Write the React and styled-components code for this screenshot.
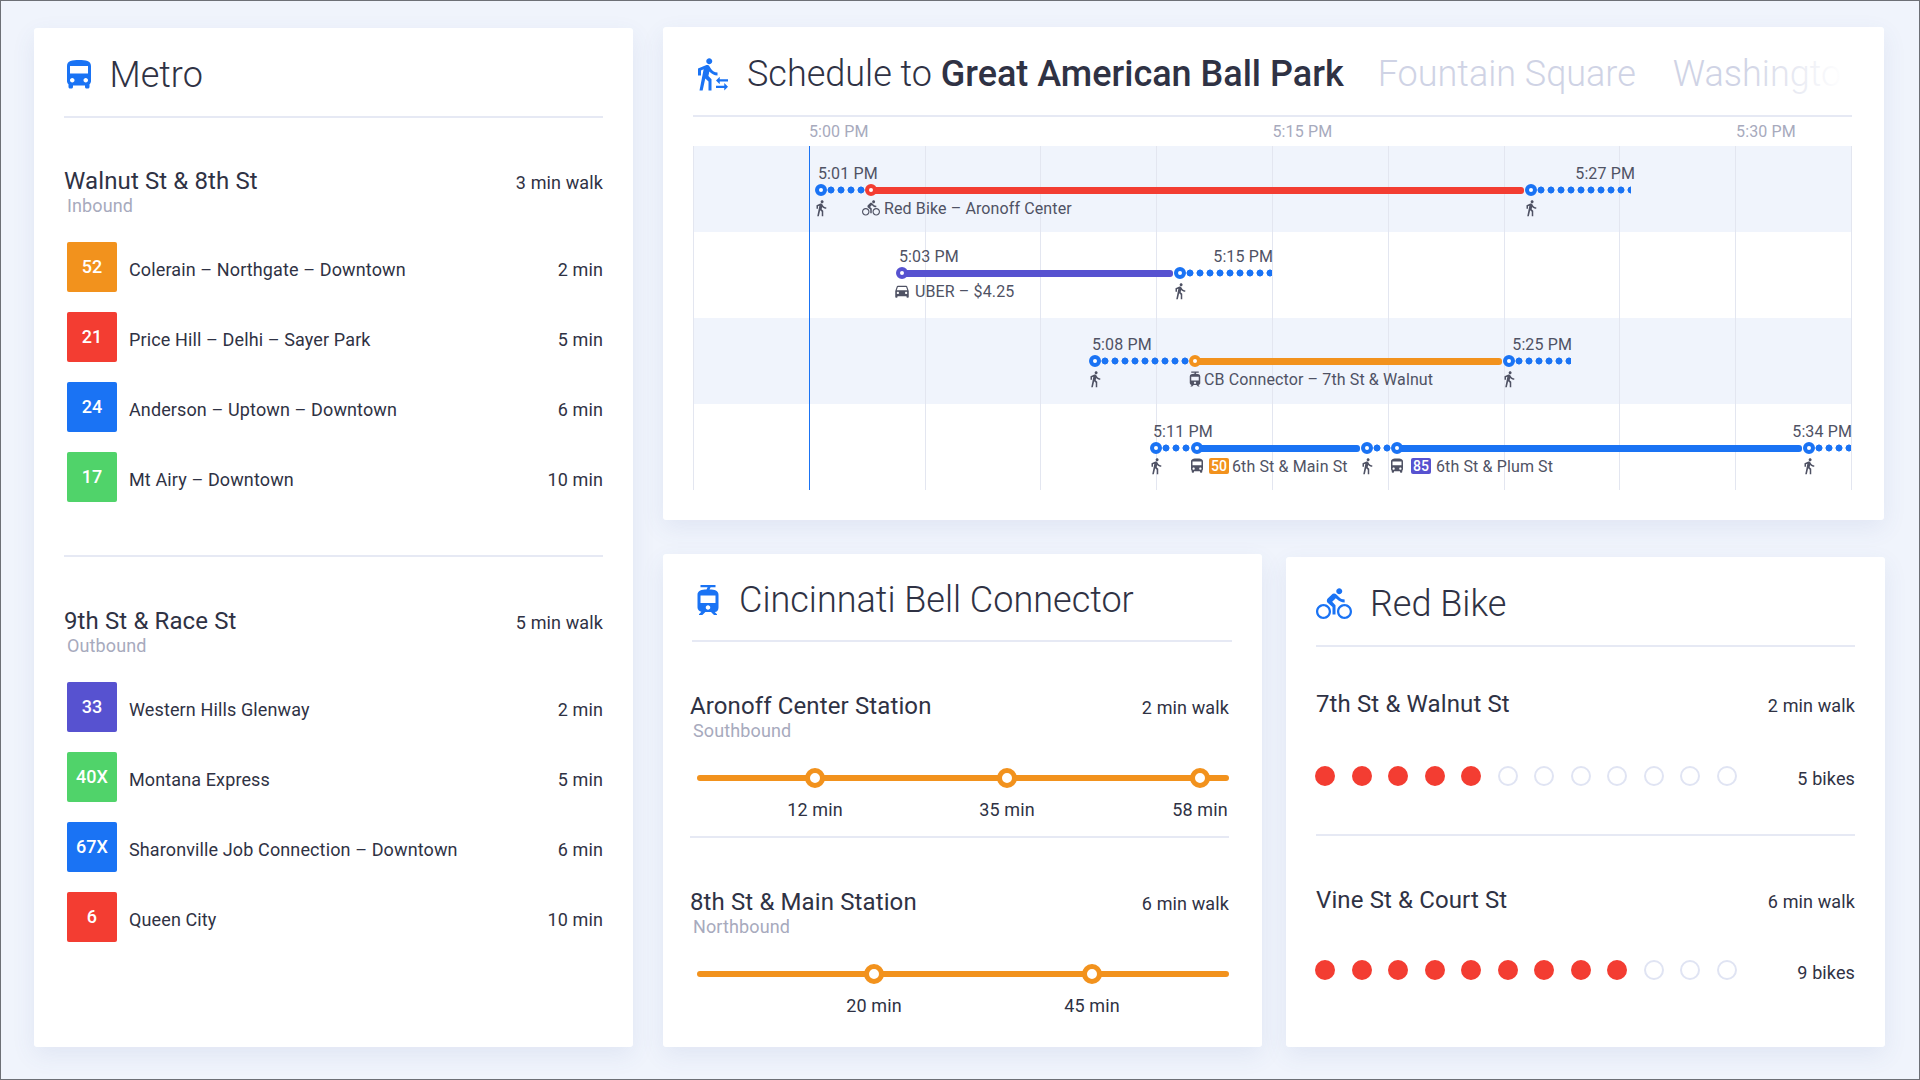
import React from 'react'
import styled, { createGlobalStyle } from 'styled-components'
import {
  MdDirectionsBus,
  MdDirectionsBike,
  MdDirectionsCar,
  MdDirectionsWalk,
  MdTram,
  MdTransferWithinAStation,
} from 'react-icons/md'

const BLUE = '#1a73f4'
const RED = '#f33d32'
const ORANGE = '#f2921d'
const PURPLE = '#5752d0'
const GREEN = '#50d36a'

const metroStops = [
  {
    name: 'Walnut St & 8th St',
    dir: 'Inbound',
    walk: '3 min walk',
    routes: [
      { no: '52', color: ORANGE, name: 'Colerain – Northgate – Downtown', time: '2 min' },
      { no: '21', color: RED, name: 'Price Hill – Delhi – Sayer Park', time: '5 min' },
      { no: '24', color: BLUE, name: 'Anderson – Uptown – Downtown', time: '6 min' },
      { no: '17', color: GREEN, name: 'Mt Airy – Downtown', time: '10 min' },
    ],
  },
  {
    name: '9th St & Race St',
    dir: 'Outbound',
    walk: '5 min walk',
    routes: [
      { no: '33', color: PURPLE, name: 'Western Hills Glenway', time: '2 min' },
      { no: '40X', color: GREEN, name: 'Montana Express', time: '5 min' },
      { no: '67X', color: BLUE, name: 'Sharonville Job Connection – Downtown', time: '6 min' },
      { no: '6', color: RED, name: 'Queen City', time: '10 min' },
    ],
  },
]

const trips = [
  {
    top: 17,
    shaded: true,
    start: { x: 125, text: '5:01 PM' },
    end: { x: 942, text: '5:27 PM' },
    legs: [
      { from: 128, to: 178, walk: true },
      { from: 178, to: 838, color: RED },
      { from: 838, to: 938, walk: true },
    ],
    stops: [{ x: 128, color: BLUE }, { x: 178, color: RED }, { x: 838, color: BLUE }],
    walks: [128, 838],
    notes: [{ x: 169, Icon: MdDirectionsBike, gap: 4, text: 'Red Bike – Aronoff Center' }],
  },
  {
    top: 14,
    start: { x: 206, text: '5:03 PM' },
    end: { x: 580, text: '5:15 PM' },
    legs: [
      { from: 209, to: 487, color: PURPLE },
      { from: 487, to: 579, walk: true },
    ],
    stops: [{ x: 209, color: PURPLE }, { x: 487, color: BLUE }],
    walks: [487],
    notes: [{ x: 200, Icon: MdDirectionsCar, gap: 4, text: 'UBER – $4.25' }],
  },
  {
    top: 16,
    shaded: true,
    start: { x: 399, text: '5:08 PM' },
    end: { x: 879, text: '5:25 PM' },
    legs: [
      { from: 402, to: 502, walk: true },
      { from: 502, to: 816, color: ORANGE },
      { from: 816, to: 878, walk: true },
    ],
    stops: [{ x: 402, color: BLUE }, { x: 502, color: ORANGE }, { x: 816, color: BLUE }],
    walks: [402, 816],
    notes: [{ x: 493, Icon: MdTram, gap: 0, text: 'CB Connector – 7th St & Walnut' }],
  },
  {
    top: 17,
    start: { x: 460, text: '5:11 PM' },
    end: { x: 1159, text: '5:34 PM' },
    legs: [
      { from: 463, to: 504, walk: true },
      { from: 504, to: 674, color: BLUE },
      { from: 674, to: 704, walk: true },
      { from: 704, to: 1116, color: BLUE },
      { from: 1116, to: 1158, walk: true },
    ],
    stops: [
      { x: 463, color: BLUE },
      { x: 504, color: BLUE },
      { x: 674, color: BLUE },
      { x: 704, color: BLUE },
      { x: 1116, color: BLUE },
    ],
    walks: [463, 674, 1116],
    notes: [
      { x: 495, Icon: MdDirectionsBus, gap: 3, badge: '50', badgeColor: ORANGE, text: '6th St & Main St' },
      { x: 695, Icon: MdDirectionsBus, gap: 5, badge: '85', badgeColor: PURPLE, text: '6th St & Plum St' },
    ],
  },
]

const stations = [
  {
    name: 'Aronoff Center Station',
    dir: 'Southbound',
    walk: '2 min walk',
    stops: [{ x: 118, label: '12 min' }, { x: 310, label: '35 min' }, { x: 503, label: '58 min' }],
  },
  {
    name: '8th St & Main Station',
    dir: 'Northbound',
    walk: '6 min walk',
    stops: [{ x: 177, label: '20 min' }, { x: 395, label: '45 min' }],
  },
]

const bikeStations = [
  { name: '7th St & Walnut St', walk: '2 min walk', bikes: 5, gap: 46 },
  { name: 'Vine St & Court St', walk: '6 min walk', bikes: 9, gap: 44 },
]

const GlobalStyle = createGlobalStyle`
  html, body {
    margin: 0;
    padding: 0;
    background: #f0f4fc;
  }
  * {
    box-sizing: border-box;
  }
`

const Page = styled.div`
  width: 1920px;
  height: 1080px;
  border: 1px solid #6d7076;
  background: #f0f4fc;
  padding: 26px 0 0 33px;
  display: flex;
  gap: 30px;
  align-items: flex-start;
  font-family: Roboto, 'Liberation Sans', sans-serif;
  letter-spacing: 0.12px;
  color: #2f3244;
  overflow: hidden;
`

const Card = styled.section`
  background: #fff;
  border-radius: 3px;
  box-shadow: 0 8px 24px rgba(70, 90, 150, 0.09);
`

const MetroCard = styled(Card)`
  width: 599px;
  height: 1019px;
  margin-top: 1px;
  padding: 0 30px;
`

const RightColumn = styled.div`
  width: 1222px;
  display: flex;
  flex-direction: column;
  gap: 34px;
`

const ScheduleCard = styled(Card)`
  width: 1221px;
  height: 493px;
  padding: 0 32px 0 30px;
`

const BottomRow = styled.div`
  display: flex;
  gap: 24px;
  align-items: flex-start;
`

const ConnectorCard = styled(Card)`
  width: 599px;
  height: 493px;
  padding: 0 30px 0 29px;
`

const BikeCard = styled(Card)`
  width: 599px;
  height: 490px;
  margin-top: 3px;
  padding: 0 30px;
`

const Header = styled.header`
  height: ${(p) => p.$height || 90}px;
  padding-top: 5px;
  display: flex;
  align-items: center;
  gap: ${(p) => p.$gap}px;
  border-bottom: 2px solid #e6e9f4;
  font-size: 36px;
  font-weight: 300;
  letter-spacing: 0;
  white-space: nowrap;

  svg {
    flex: none;
    width: 36px;
    height: 36px;
    color: ${BLUE};
    margin-left: ${(p) => p.$iconOffset}px;
  }
`

const TitleStrip = styled.div`
  position: relative;
  flex: 1;
  display: flex;
  gap: 37px;
  overflow: hidden;

  &::after {
    content: '';
    position: absolute;
    top: 0;
    right: 0;
    bottom: 0;
    width: 110px;
    background: linear-gradient(to right, rgba(255, 255, 255, 0), #fff 92%);
  }

  strong {
    font-weight: 500;
  }
`

const ActiveTab = styled.span`
  margin-right: -3px;
`

const OtherTab = styled.span`
  color: #cfd3e5;
`

const StopHead = styled.div`
  display: flex;
  justify-content: space-between;
  align-items: flex-start;
`

const StopName = styled.div`
  font-size: 24px;
  line-height: 28px;
  font-weight: 400;
`

const StopDirection = styled.div`
  font-size: 18px;
  line-height: 22px;
  color: #a7aabd;
  padding-left: 3px;
`

const WalkTime = styled.div`
  font-size: 18px;
  line-height: 28px;
  margin-top: 2px;
`

const MetroSection = styled.div`
  padding-top: 49px;
  margin-bottom: 53px;

  & + & {
    border-top: 2px solid #e6e9f4;
    padding-top: 50px;
  }
`

const RouteList = styled.ul`
  list-style: none;
  margin: 25px 0 0;
  padding: 0 0 0 3px;
  display: flex;
  flex-direction: column;
  gap: 20px;
`

const RouteRow = styled.li`
  height: 50px;
  display: flex;
  align-items: center;
  font-size: 18px;
`

const RouteBadge = styled.span`
  width: 50px;
  height: 50px;
  margin-right: 12px;
  border-radius: 2px;
  display: flex;
  align-items: center;
  justify-content: center;
  padding-bottom: 2px;
  background: ${(p) => p.$color};
  color: #fff;
  font-weight: 500;
`

const RouteName = styled.span`
  padding-top: 5px;
`

const RouteTime = styled.span`
  margin-left: auto;
  padding-top: 5px;
`

const Axis = styled.div`
  height: 29px;
  display: grid;
  grid-template-columns: repeat(10, 1fr);
  align-items: center;
  font-size: 16px;
  color: #a7aabd;
`

const AxisLabel = styled.span`
  grid-column: ${(p) => p.$col};
  white-space: nowrap;
`

const Timeline = styled.div`
  position: relative;
  height: 344px;
`

const GridLines = styled.div`
  position: absolute;
  inset: 0;
  display: grid;
  grid-template-columns: repeat(10, 1fr);
  border-right: 1px solid #e3e6f0;
`

const GridLine = styled.div`
  border-left: 1px solid ${(p) => (p.$now ? BLUE : '#e3e6f0')};
`

const TripRow = styled.div`
  height: 86px;
  padding-top: ${(p) => p.$top}px;
  background: ${(p) => (p.$shaded ? '#f0f4fc' : 'transparent')};
`

const TripLayer = styled.div`
  position: relative;
  z-index: 1;
  height: ${(p) => p.$height}px;
`

const TimeText = styled.span`
  position: absolute;
  top: 0;
  line-height: 22px;
  font-size: 16px;
  color: #4f5264;
  white-space: nowrap;
  ${(p) => p.$end && 'transform: translateX(-100%);'}
`

const Leg = styled.div`
  position: absolute;
  top: 2px;
  height: 7px;
  border-radius: 3px;
  background: ${(p) => p.$color};
`

const WalkLeg = styled.div`
  position: absolute;
  top: 1px;
  height: 8px;
  background: radial-gradient(circle at 5px 4px, ${BLUE} 3.2px, transparent 3.8px) 0 0 / 10px 8px repeat-x;
`

const StopDot = styled.div`
  position: absolute;
  top: -1px;
  width: 12px;
  height: 12px;
  margin-left: -6px;
  border-radius: 50%;
  background: #fff;
  border: 4px solid ${(p) => p.$color};
`

const WalkMark = styled(MdDirectionsWalk)`
  position: absolute;
  top: 4px;
  margin-left: -9px;
  width: 18px;
  height: 18px;
  color: #4f5264;
`

const Note = styled.div`
  position: absolute;
  top: 0;
  height: 26px;
  display: flex;
  align-items: center;
  gap: ${(p) => p.$gap}px;
  font-size: 16px;
  color: #4f5264;
  white-space: nowrap;

  svg {
    flex: none;
    width: 18px;
    height: 18px;
  }
`

const NoteBadge = styled.span`
  width: 20px;
  height: 16px;
  border-radius: 2px;
  display: flex;
  align-items: center;
  justify-content: center;
  background: ${(p) => p.$color};
  color: #fff;
  font-size: 14px;
  font-weight: 500;
`

const StationSection = styled.div`
  height: 194px;
  margin: 0 3px 0 -2px;
  padding-top: 50px;

  & + & {
    border-top: 2px solid #e6e9f4;
  }
`

const Track = styled.div`
  position: relative;
  height: 6px;
  margin: 33px 0 0 7px;
  border-radius: 3px;
  background: ${ORANGE};
`

const TrackStop = styled.div`
  position: absolute;
  top: -7px;
  width: 20px;
  height: 20px;
  margin-left: -10px;
  border-radius: 50%;
  background: #fff;
  border: 5px solid ${ORANGE};
`

const TrackLabel = styled.span`
  position: absolute;
  top: 26px;
  left: 50%;
  transform: translateX(-50%);
  font-size: 18px;
  line-height: 22px;
  white-space: nowrap;
`

const BikeSection = styled.div`
  height: 187px;
  padding-top: 43px;

  & + & {
    height: 200px;
    border-top: 2px solid #e6e9f4;
    padding-top: 50px;
  }
`

const BikeRow = styled.div`
  display: flex;
  align-items: flex-start;
  margin-top: ${(p) => p.$gap}px;
  font-size: 18px;
  line-height: 26px;
`

const BikeDots = styled.div`
  display: flex;
  gap: 16.5px;
  margin-left: -1px;
`

const BikeDot = styled.span`
  width: 20px;
  height: 20px;
  border-radius: 50%;
  background: ${(p) => (p.$filled ? RED : '#fff')};
  border: 2px solid ${(p) => (p.$filled ? RED : '#e0e4f3')};
`

const BikeCount = styled.span`
  margin-left: auto;
`

const App = () => {
  return (
    <Page>
      <GlobalStyle />
      <MetroCard>
        <Header $gap={13} $iconOffset={-3.5}>
          <MdDirectionsBus />
          <span>Metro</span>
        </Header>
        {metroStops.map((stop) => (
          <MetroSection key={stop.name}>
            <StopHead>
              <div>
                <StopName>{stop.name}</StopName>
                <StopDirection>{stop.dir}</StopDirection>
              </div>
              <WalkTime>{stop.walk}</WalkTime>
            </StopHead>
            <RouteList>
              {stop.routes.map((route) => (
                <RouteRow key={route.no}>
                  <RouteBadge $color={route.color}>{route.no}</RouteBadge>
                  <RouteName>{route.name}</RouteName>
                  <RouteTime>{route.time}</RouteTime>
                </RouteRow>
              ))}
            </RouteList>
          </MetroSection>
        ))}
      </MetroCard>

      <RightColumn>
        <ScheduleCard>
          <Header $gap={16} $iconOffset={2}>
            <MdTransferWithinAStation />
            <TitleStrip>
              <ActiveTab>
                Schedule to <strong>Great American Ball Park</strong>
              </ActiveTab>
              <OtherTab>Fountain Square</OtherTab>
              <OtherTab>Washington Park</OtherTab>
            </TitleStrip>
          </Header>
          <Axis>
            <AxisLabel $col={2}>5:00 PM</AxisLabel>
            <AxisLabel $col={6}>5:15 PM</AxisLabel>
            <AxisLabel $col={10}>5:30 PM</AxisLabel>
          </Axis>
          <Timeline>
            {trips.map((trip) => (
              <TripRow key={trip.start.text} $top={trip.top} $shaded={trip.shaded}>
                <TripLayer $height={22}>
                  <TimeText style={{ left: trip.start.x }}>{trip.start.text}</TimeText>
                  <TimeText $end style={{ left: trip.end.x }}>{trip.end.text}</TimeText>
                </TripLayer>
                <TripLayer $height={10}>
                  {trip.legs.map((leg) =>
                    leg.walk ? (
                      <WalkLeg key={leg.from} style={{ left: leg.from + 5, width: leg.to - leg.from - 5 }} />
                    ) : (
                      <Leg key={leg.from} $color={leg.color} style={{ left: leg.from, width: leg.to - leg.from - 7 }} />
                    )
                  )}
                  {trip.stops.map((stop) => (
                    <StopDot key={stop.x} $color={stop.color} style={{ left: stop.x }} />
                  ))}
                </TripLayer>
                <TripLayer $height={26}>
                  {trip.walks.map((x) => (
                    <WalkMark key={x} style={{ left: x }} />
                  ))}
                  {trip.notes.map(({ x, Icon, gap, badge, badgeColor, text }) => (
                    <Note key={text} $gap={gap} style={{ left: x }}>
                      <Icon />
                      {badge && <NoteBadge $color={badgeColor}>{badge}</NoteBadge>}
                      <span>{text}</span>
                    </Note>
                  ))}
                </TripLayer>
              </TripRow>
            ))}
            <GridLines>
              {Array.from({ length: 10 }, (_, i) => (
                <GridLine key={i} $now={i === 1} />
              ))}
            </GridLines>
          </Timeline>
        </ScheduleCard>

        <BottomRow>
          <ConnectorCard>
            <Header $height={88} $gap={13} $iconOffset={-2}>
              <MdTram />
              <span>Cincinnati Bell Connector</span>
            </Header>
            {stations.map((station) => (
              <StationSection key={station.name}>
                <StopHead>
                  <div>
                    <StopName>{station.name}</StopName>
                    <StopDirection>{station.dir}</StopDirection>
                  </div>
                  <WalkTime>{station.walk}</WalkTime>
                </StopHead>
                <Track>
                  {station.stops.map((stop) => (
                    <TrackStop key={stop.x} style={{ left: stop.x }}>
                      <TrackLabel>{stop.label}</TrackLabel>
                    </TrackStop>
                  ))}
                </Track>
              </StationSection>
            ))}
          </ConnectorCard>

          <BikeCard>
            <Header $gap={18} $iconOffset={0}>
              <MdDirectionsBike />
              <span>Red Bike</span>
            </Header>
            {bikeStations.map((station) => (
              <BikeSection key={station.name}>
                <StopHead>
                  <StopName>{station.name}</StopName>
                  <WalkTime>{station.walk}</WalkTime>
                </StopHead>
                <BikeRow $gap={station.gap}>
                  <BikeDots>
                    {Array.from({ length: 12 }, (_, i) => (
                      <BikeDot key={i} $filled={i < station.bikes} />
                    ))}
                  </BikeDots>
                  <BikeCount>{station.bikes} bikes</BikeCount>
                </BikeRow>
              </BikeSection>
            ))}
          </BikeCard>
        </BottomRow>
      </RightColumn>
    </Page>
  )
}

export default App
